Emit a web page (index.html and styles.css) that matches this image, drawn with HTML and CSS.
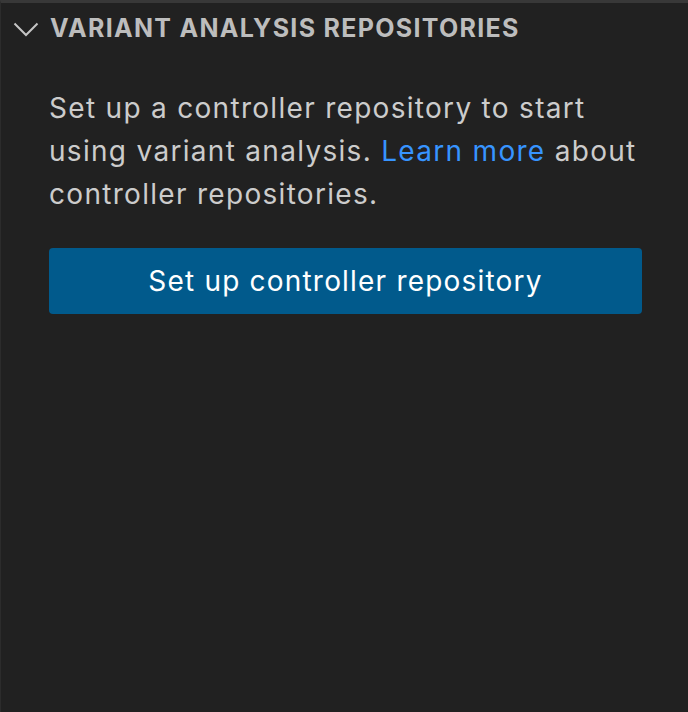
FILE: index.html
```html
<!DOCTYPE html>
<html>
<head>
<meta charset="utf-8">
<link rel="stylesheet" href="styles.css">
</head>
<body>
<div class="pane">
  <div class="pane-header">
    <svg class="chevron" width="26" height="16" viewBox="0 0 26 16"><path d="M1.5 2.5 L13 14 L24.5 2.5" fill="none" stroke="#c5c5c5" stroke-width="2"/></svg>
    <span class="title">VARIANT ANALYSIS REPOSITORIES</span>
  </div>
  <div class="pane-body">
    <p class="message">Set up a controller repository to start using variant analysis. <a href="#" class="link">Learn more</a> about controller repositories.</p>
    <button class="btn">Set up controller repository</button>
  </div>
</div>
</body>
</html>
```
FILE: styles.css
```css
html, body {
  margin: 0;
  padding: 0;
  background: #212121;
  height: 100%;
}
.pane {
  box-sizing: border-box;
  height: 712px;
  width: 688px;
  background: #212121;
  border-top: 3px solid #383838;
  border-left: 1px solid #2c2c2c;
  font-family: Inter, "Noto Sans", sans-serif;
}
.pane-header {
  display: flex;
  align-items: center;
  height: 50px;
  padding-left: 12px;
}
.chevron {
  flex: none;
  margin-top: 2px;
}
.title {
  margin-left: 11px;
  font-size: 25px;
  font-weight: 700;
  color: #bdbdbd;
  letter-spacing: 1.3px;
}
.pane-body {
  padding: 34px 45px 0 48px;
}
.message {
  margin: 0;
  font-size: 28px;
  line-height: 43px;
  letter-spacing: 1.3px;
  color: #cccccc;
}
.link {
  color: #3794ff;
  text-decoration: none;
}
.btn {
  display: block;
  width: 593px;
  height: 66px;
  margin-top: 32px;
  border: none;
  border-radius: 4px;
  background: #015a8c;
  color: #ffffff;
  font-family: Inter, "Noto Sans", sans-serif;
  font-size: 28px;
  letter-spacing: 1.2px;
  padding: 0;
}
```
